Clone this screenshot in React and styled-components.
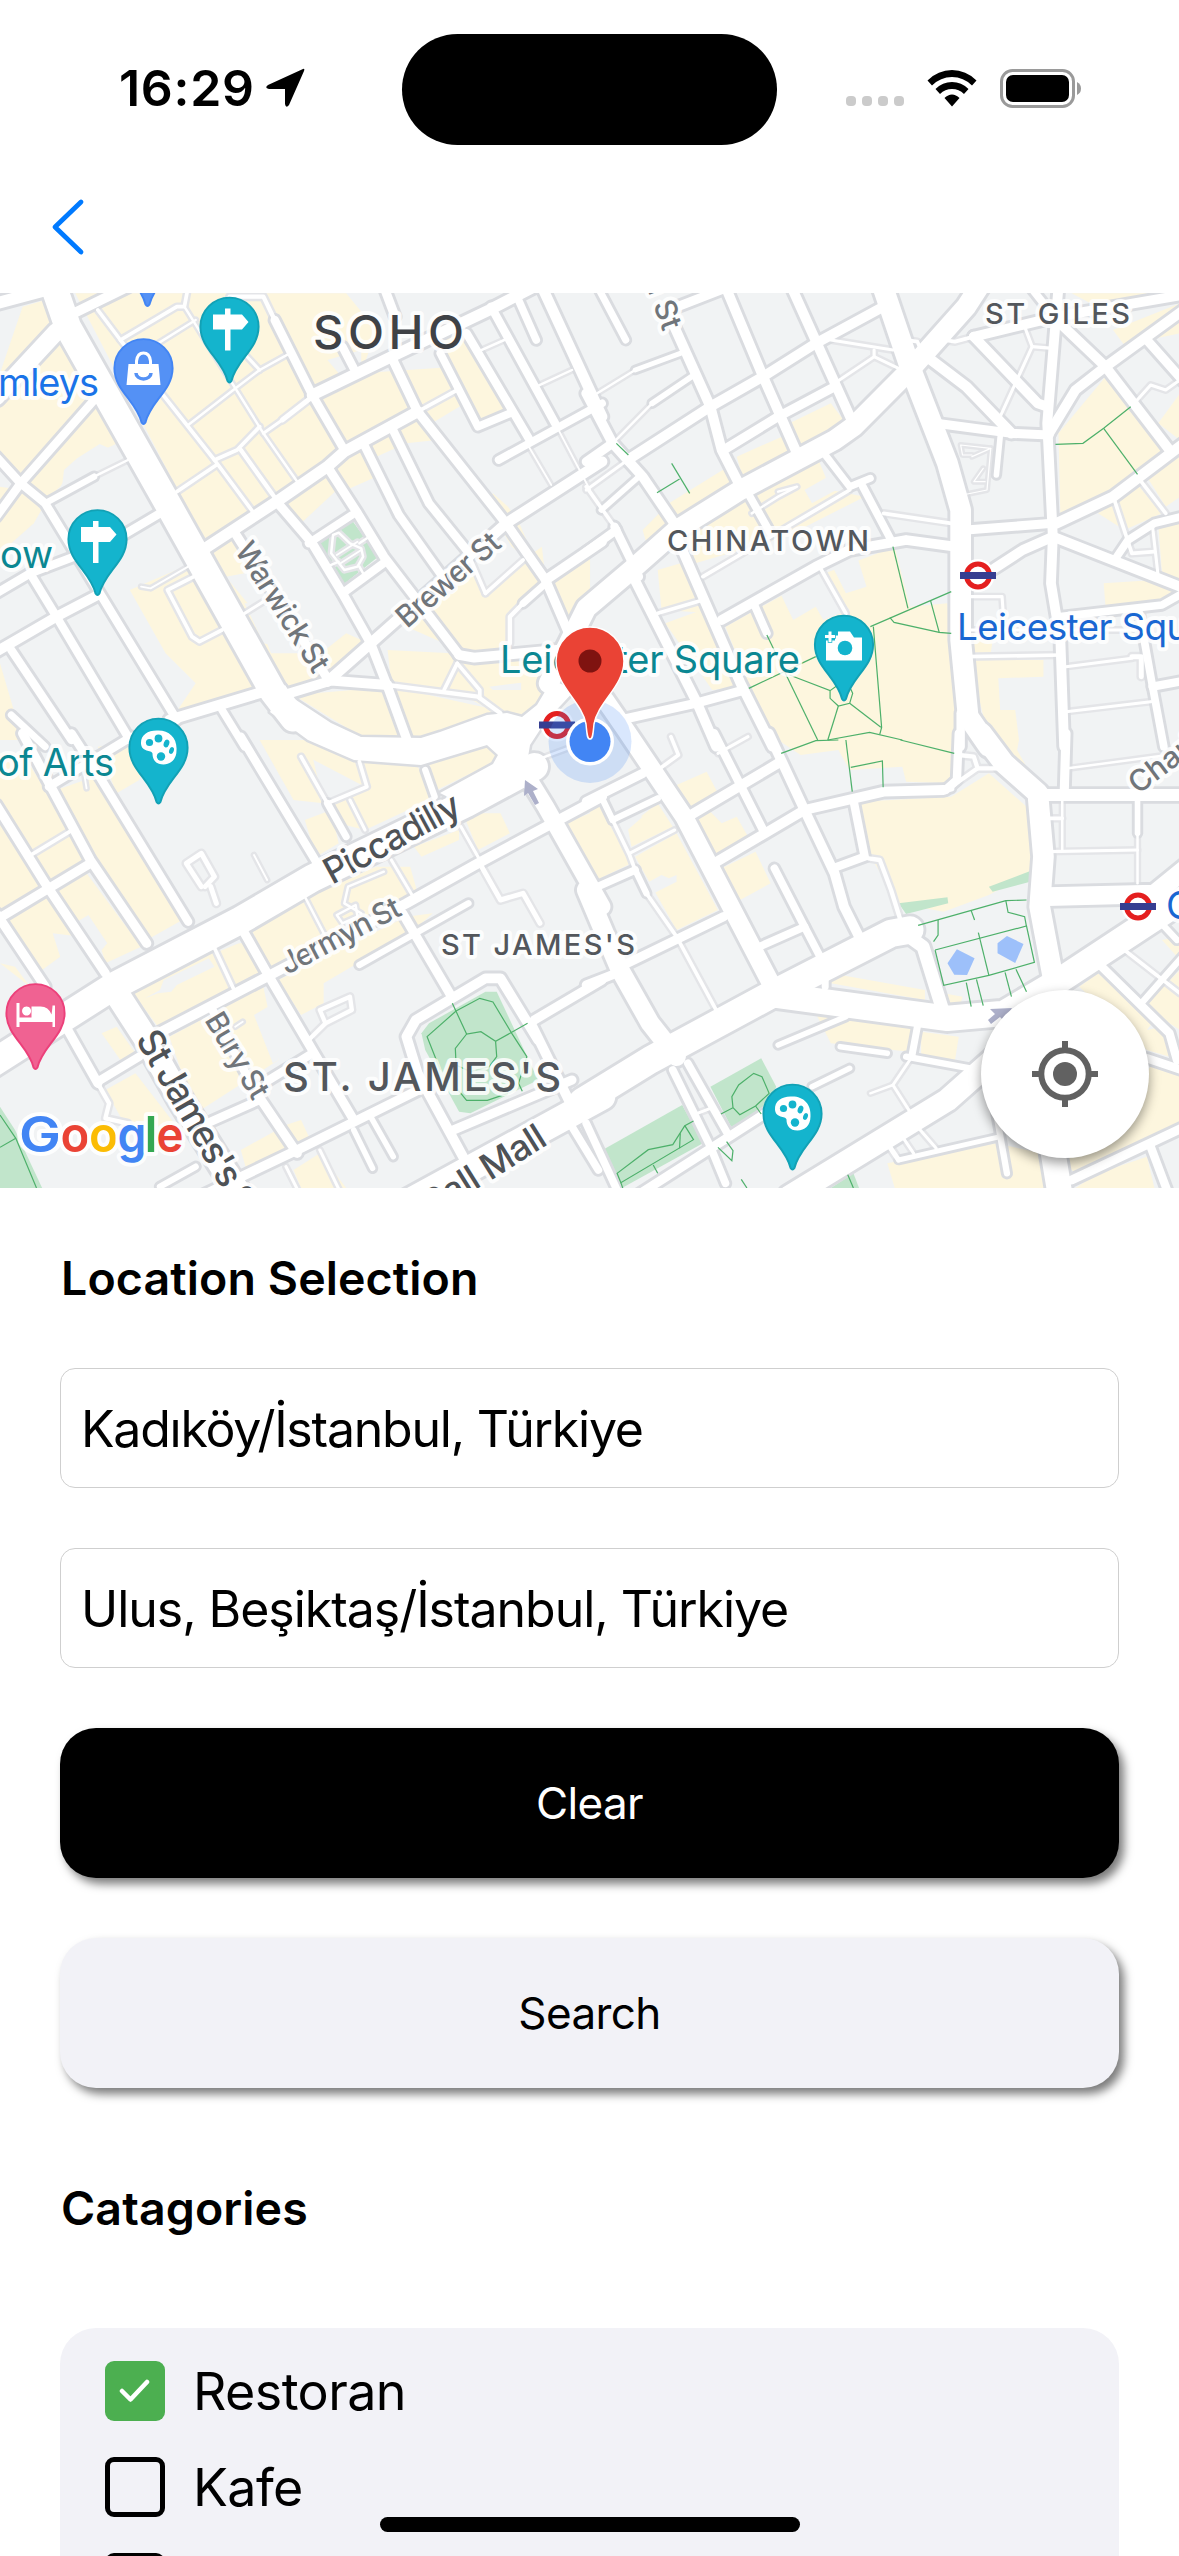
import React from "react";
import styled, { createGlobalStyle, css } from "styled-components";

const GlobalStyle = createGlobalStyle`
  * { box-sizing: border-box; }
  body { margin: 0; background: #fff; }
`;

const Screen = styled.main`
  position: relative;
  display: flex;
  flex-direction: column;
  width: 1179px;
  height: 2556px;
  overflow: hidden;
  background: #fff;
  color: #000;
  font-family: Inter, "Liberation Sans", sans-serif;
`;

const StatusBar = styled.div`
  display: grid;
  grid-template-columns: 402px 375px 1fr;
  align-items: center;
  height: 177px;
  flex: none;
`;

const Clock = styled.div`
  display: flex;
  align-items: center;
  gap: 10px;
  padding: 0 0 2px 119px;
  font-size: 50px;
  font-weight: 600;
  line-height: 60px;
  letter-spacing: 0.7px;
`;

const Island = styled.div`
  height: 111px;
  margin-top: 1px;
  border-radius: 56px;
  background: #000;
`;

const StatusIcons = styled.div`
  display: flex;
  align-items: center;
  padding-left: 69px;
  gap: 23px;
`;

const SignalDots = styled.div`
  display: flex;
  gap: 6px;
  padding-top: 24px;
`;

const Dot = styled.i`
  width: 10px;
  height: 10px;
  border-radius: 4px;
  background: #cbcbcb;
`;

const NavBar = styled.nav`
  display: flex;
  align-items: center;
  height: 116px;
  padding: 0 0 17px 49px;
  flex: none;
`;

const BackButton = styled.button`
  display: flex;
  padding: 0;
  border: 0;
  background: none;
`;

const MapFrame = styled.section`
  position: relative;
  height: 895px;
  flex: none;
  overflow: hidden;
`;

const MapCanvas = styled.svg`
  display: block;
  width: 1179px;
  height: 895px;
  background: #f1f3f4;
`;

const LocateButton = styled.button`
  position: absolute;
  right: 30px;
  bottom: 30px;
  display: flex;
  align-items: center;
  justify-content: center;
  width: 168px;
  height: 168px;
  padding: 0;
  border: 0;
  border-radius: 50%;
  background: #fff;
  box-shadow: 0 5px 12px rgba(0, 0, 0, 0.4);
`;

const Form = styled.section`
  display: flex;
  flex-direction: column;
  padding: 60px 60px 0;
`;

const Heading = styled.h2`
  margin: 0;
  font-size: 46.5px;
  font-weight: 600;
  line-height: 60px;
  letter-spacing: 0.1px;
  text-indent: 1px;
`;

const Fields = styled.div`
  display: flex;
  flex-direction: column;
  gap: 60px;
  padding: 60px 0 90px;
`;

const Field = styled.div`
  display: flex;
  align-items: center;
  height: 120px;
  padding: 1px 20px 0;
  border: 1px solid #cfcfcf;
  border-radius: 15px;
  font-size: 50px;
  letter-spacing: ${(p) => p.$tracking}px;
  white-space: nowrap;
`;

const Button = styled.button`
  height: 150px;
  padding: 0;
  border: 0;
  border-radius: 36px;
  font-family: inherit;
  font-size: 44px;
  letter-spacing: -0.6px;
  box-shadow: 5px 6px 10px rgba(0, 0, 0, 0.52);
  ${(p) =>
    p.$dark
      ? css`background: #000; color: #fff;`
      : css`background: #f2f2f7; color: #000;`}
`;

const Categories = styled.ul`
  display: flex;
  flex-direction: column;
  gap: 36px;
  height: 400px;
  margin: 90px 0 0;
  padding: 33px 45px;
  border-radius: 36px;
  background: #f2f2f7;
  list-style: none;
`;

const Category = styled.li`
  display: flex;
  align-items: center;
  gap: 28px;
  height: 60px;
  flex: none;
  font-size: 52px;
  letter-spacing: -0.6px;
`;

const CheckBox = styled.span`
  display: flex;
  align-items: center;
  justify-content: center;
  width: 60px;
  height: 60px;
  border-radius: 9px;
  ${(p) => (p.$on ? css`background: #4caf50;` : css`border: 5px solid #000;`)}
`;

const HomeIndicator = styled.div`
  position: absolute;
  left: 380px;
  bottom: 24px;
  width: 420px;
  height: 15px;
  border-radius: 8px;
  background: #000;
`;

/* The map is stored as four tiles, each with its own local coordinates. */
const TILE_X = 0.3763;
const TILE_Y = 1 / 3;

const tiles = [
  {
    x: 0, y: 290,
    built: [
      "200,10 920,10 1000,120 960,250 1210,230 1250,330 1000,500 870,530 750,640 550,770",
      "60,50 120,30 160,150 330,450 200,520 160,590 110,640 0,500 0,250",
      "0,590 60,600 110,660 90,700 0,790",
      "550,770 630,740 650,850 600,860 680,970 720,1090 800,1090 880,1160 760,1210",
      "345,900 510,820 690,1200 460,1280 520,1180 440,1090",
      "750,640 870,550 895,600 800,700", "820,1120 920,1030 980,1060 900,1150",
      "1040,990 1240,800 1280,900 1440,770 1450,870 1350,1000 1360,1080 1240,1090",
      "1310,610 1350,650 1380,700 1430,830 1360,770 1290,640",
      "1030,1080 1200,1090 1350,1100 1480,1090 1430,1240 1380,1285 1320,1270 1220,1210 1040,1180",
      "780,1215 1040,1190 1320,1260 1260,1310 1090,1350 960,1340",
      "1440,870 1568,790 1568,960 1500,1000",
      "1130,120 1240,120 1350,370 1280,400", "0,1120 60,1350 0,1350",
      "880,540 960,480 1000,560 920,600", "1000,500 1110,380 1160,450 1080,460",
    ],
    blocks: ["205,505 265,462 340,500 420,660 300,730 130,650 165,590 170,540", "870,210 960,180 960,240 900,250", "650,940 710,940 780,1080 700,1060", "1300,1190 1385,1178 1385,1200 1310,1200"],
    parks: ["835,760 935,690 1005,800 905,890"],
    roads: {
      main: [[28, "140,-20 180,110 455,660 725,1205 780,1285"]],
      wide: [[28, "150,125 -10,320"], [18, "545,775 735,635 870,530 915,485 1110,365"], [18, "830,315 1040,200 1300,60 1420,-10"], [17, "870,1175 985,1060 1345,700 1600,515"], [17, "1440,-10 1600,380"]],
      street: [[17, "-10,40 140,-5"], [12, "250,330 55,580 -10,680"], [12, "-10,500 55,580 120,640 260,900 470,1290"], [9, "120,640 250,560"], [12, "425,670 290,760 80,850 -10,910"], [14, "-10,1085 150,980 260,915"], [12, "80,850 150,980 345,1350"], [12, "30,1080 190,1350"], [10, "30,1275 120,1370"], [14, "205,65 340,-10"], [12, "730,90 830,315 915,480"], [12, "910,170 940,235"], [13, "1040,200 1110,365 1345,700 1450,870 1515,1040"], [13, "735,635 830,760 910,910 985,1060 1030,1190 1085,1360"], [13, "870,530 950,670 1020,800 1220,1095"], [12, "970,470 1060,675 1195,890"], [12, "1040,410 1140,640 1240,780"], [13, "625,730 870,1165"], [14, "740,1220 880,1172 1030,1185"], [11, "820,760 935,675"], [12, "910,910 1025,815"], [15, "450,1290 700,1205"], [14, "1220,1095 1260,1103 1480,1080"], [14, "1450,870 1600,755"], [10, "1390,940 1450,880"], [11, "1170,190 1270,410 1355,370"], [12, "1240,130 1405,445"], [11, "1325,510 1600,340"], [11, "1370,10 1425,150"], [12, "1305,50 1475,400"], [13, "1020,-10 1050,80"], [11, "590,1260 650,1370"]],
      lane: [[4, "250,560 340,510"], [6, "260,60 320,150 470,50 490,50 500,-10"], [4, "490,50 700,430 790,575"], [6, "320,150 430,310 570,510 675,670"], [4, "420,160 520,90"], [4, "500,405 620,300 690,240 770,190"], [6, "570,510 630,480 690,410"], [5, "700,430 750,390"], [8, "750,390 830,320"], [6, "470,605 575,525"], [7, "640,480 735,630"], [7, "610,20 700,20 730,90"], [5, "640,180 690,240"], [6, "1110,365 1215,300"], [7, "1030,1185 1270,1220 1330,1270"], [5, "650,970 700,935"], [6, "515,860 445,900 510,1040 530,1055 590,1020"], [3, "500,830 400,895 375,890"], [6, "1215,1120 1180,1200"], [6, "1215,1120 1275,1200 1275,1225"], [7, "1390,940 1355,980 1355,1060"], [6, "1290,910 1390,810"], [6, "1240,780 1290,910"], [4, "1270,185 1340,150"], [3, "1400,460 1465,585"], [3, "1475,400 1568,600"], [4, "1425,290 1520,240"], [4, "865,832 900,815"], [4, "885,735 900,728 930,760 960,775 965,800 950,830 915,840 880,790 885,735"], [3, "895,795 950,755"], [3, "905,820 960,780"], [4, "955,830 965,850"], [4, "955,760 975,745"]],
    },
    paths: [],
  },
  {
    x: 590, y: 290,
    built: [
      "140,720 210,640 360,535 390,590 230,690 150,760", "390,500 510,440 530,490 410,580", "530,400 640,340 680,400 550,470",
      "250,700 410,620 600,490 640,600 730,620 520,740 280,820", "180,840 270,810 330,970 190,960", "200,1000 320,950 400,1190 325,1200",
      "360,1010 600,860 810,770 850,950 950,940 960,1100 975,1260 970,1350 480,1350",
      "1010,1110 1205,1110 1205,1160 1085,1165 1090,1260 1130,1260 1140,1350 1060,1350", "1010,1050 1070,1050 1065,1090 1010,1090",
      "1245,430 1370,260 1530,480 1470,550 1250,680", "1390,120 1568,40 1568,130 1420,165", "1280,10 1480,10 1440,40 1330,40",
      "1365,880 1500,870 1568,900 1510,940 1370,950", "1510,700 1568,690 1568,870 1520,850", "1350,670 1460,590 1520,670 1420,720", "1510,400 1568,310 1568,450", "1480,560 1568,480 1568,620 1530,650",
    ],
    blocks: ["480,850 600,840 690,960 620,990 600,950 540,990", "640,820 710,800 735,890 680,910", "570,600 640,555 670,590 590,640", "825,770 960,770 960,910 850,940", "620,690 720,640 790,740 640,760"],
    parks: [],
    roads: {
      main: [[21, "-110,1180 -10,955 110,840 230,720 400,600 650,450 700,410 850,240 1000,50 1040,-20"], [22, "775,-20 850,230 950,520 985,660 985,1050 1005,1280 1060,1370"]],
      wide: [[16, "100,510 320,350 460,260 600,160 780,50"], [16, "360,-10 460,260 550,490"], [16, "535,-10 695,390"], [16, "220,100 320,350 350,480 400,590"], [17, "1240,700 1390,620 1590,450"]],
      street: [[14, "-10,310 60,460 140,560 230,710"], [10, "20,-10 95,150"], [13, "210,60 370,-10"], [13, "-10,515 60,460"], [13, "355,480 500,380 650,290"], [7, "120,240 240,190"], [8, "165,340 270,260"], [8, "30,660 130,560"], [12, "65,710 130,860"], [12, "-10,785 70,720"], [14, "110,850 285,1240 335,1370"], [14, "230,740 400,1180 485,1370"], [11, "420,610 480,730"], [14, "350,990 600,830 690,780 840,750 970,770"], [11, "435,940 470,1030"], [10, "615,480 690,590 745,565"], [11, "725,590 800,750"], [13, "80,1290 280,1240 410,1200"], [13, "1000,720 1230,700"], [14, "1075,835 1150,780 1230,740"], [14, "1245,-10 1215,400 1230,740 1225,880 1250,1050 1260,1370"], [15, "895,200 1000,290 1120,430"], [14, "1020,140 1190,340 1215,350"], [14, "1020,140 1240,80 1600,10"], [13, "920,400 1120,430 1220,435"], [8, "1080,555 1090,440"], [14, "1240,90 1370,230 1540,480"], [14, "1220,430 1290,300 1370,230 1590,50"], [13, "1480,150 1590,290"], [11, "1170,-10 1240,90"], [14, "1230,740 1590,900"], [11, "1400,800 1430,750 1500,700 1590,675"], [11, "1250,980 1520,945 1590,900"], [12, "1495,1190 1590,1170"], [11, "1460,970 1495,1190 1525,1370"], [12, "985,1270 985,1370"]],
      lane: [[4, "-10,330 120,240"], [4, "60,460 165,340"], [5, "640,150 805,180"], [5, "755,180 755,200 650,280"], [5, "755,200 820,235"], [5, "-10,600 100,510"], [6, "-10,590 65,710"], [6, "180,970 300,930"], [6, "300,860 480,740 690,600"], [4, "430,670 500,620 550,590 500,605"], [6, "610,830 680,970"], [6, "780,670 960,700"], [6, "840,150 870,155 880,180"], [6, "940,150 970,155 1020,140"], [5, "1155,110 1175,170 1090,380"], [5, "1175,170 1230,175"], [6, "1395,635 1440,790 1500,785"], [6, "1465,575 1530,670"], [5, "1495,710 1510,860"], [5, "1450,335 1490,285 1530,300 1568,270"], [6, "1000,1100 1250,1095"], [5, "1265,1130 1440,1105"], [8, "1440,1100 1465,1100 1465,1160"], [5, "1265,1265 1490,1235"], [5, "1000,1020 1450,1020"], [5, "1010,920 1095,920 1100,1000"], [2, "1065,475 1055,600 990,615"], [2, "1015,495 990,495 985,465 1065,475 1015,500"], [2, "1045,535 1020,575 1050,575"]],
    },
    paths: ["1237,463 1310,460 1365,415 1437,350", "1365,415 1455,553", "217,520 265,610", "178,608 238,567", "70,460 102,495", "805,770 845,955", "745,1010 960,905", "905,932 928,1027 960,1030", "797,983 808,997 928,1027", "470,1035 605,1350", "422,1195 600,1100", "530,1155 638,1202 655,1188 690,1190 698,1210 690,1240 660,1248 638,1225 638,1202", "660,1248 632,1350", "690,1240 773,1312", "753,1010 775,1312 770,1333", "632,1350 743,1327 830,1350"],
  },
  {
    x: 0, y: 740,
    built: [
      "150,150 250,110 500,530 390,600", "0,40 60,40 240,370 0,520", "20,540 230,400 375,620 280,670 270,630 285,610 235,525 205,545 215,590 140,580 160,650 100,700", "260,20 410,0 370,120 310,160",
      "690,0 820,0 860,190 780,180", "880,200 970,140 800,40 820,0 940,60 1110,80 1160,170 970,270 900,250", "1140,70 1300,20 1325,60 1160,150", "810,240 880,210 900,310 840,350", "1230,220 1330,220 1355,280 1270,330",
      "660,550 800,480 1000,380 1090,380 1110,460 720,690", "740,720 1080,530 1150,520 1100,570 860,730 860,790 800,825", "1100,320 1220,270 1220,300 1120,350",
      "350,750 560,610 660,610 690,700 420,860 380,800", "450,890 700,740 740,960 520,1120", "280,1050 360,1000 470,1160 330,1150", "270,880 310,860 360,940 320,960", "760,1155 800,1140 825,1200 660,1310 640,1230", "1480,260 1568,220 1568,420", "780,1290 850,1240 920,1344 800,1344", "0,670 40,680 80,740",
    ],
    blocks: ["385,775 425,750 435,720 555,655 570,680 470,735 455,755 420,760", "675,825 720,795 740,960 725,970", "560,610 640,570 655,600 580,635"],
    parks: ["1120,880 1140,850 1290,755 1320,755 1430,1020 1250,1120 1220,1115 1130,930", "0,1100 40,1170 112,1344 0,1344"],
    roads: {
      main: [[29, "-20,970 300,740 640,540 830,415 1240,190 1420,80"], [26, "310,760 390,900 480,1080 640,1370"], [28, "1080,1390 1600,1070"]],
      wide: [[27, "1390,90 1450,200 1600,500"], [16, "395,895 710,710 1080,490 1270,370 1600,170"], [15, "540,1365 790,1230 1130,1040"]],
      street: [[13, "-10,540 240,370"], [12, "130,140 350,-10"], [13, "60,-20 140,150 240,360 390,610"], [12, "190,-20 270,120 500,545"], [13, "-10,195 120,430 280,700"], [13, "-10,520 120,740"], [12, "640,-10 840,365"], [13, "170,850 260,1030"], [12, "260,1025 370,950"], [13, "640,560 710,700 830,930 940,1140"], [12, "700,1030 830,940"], [13, "670,1040 790,1240"], [12, "550,1150 690,1080"], [12, "560,800 690,1080"], [10, "870,190 920,290"], [9, "1130,90 1155,170"], [9, "955,675 1245,490"], [13, "1070,520 1200,770"], [14, "1430,900 1330,715 1290,715 1105,840 1080,890 1110,1000 1240,1270"], [14, "1415,860 1520,1100"], [13, "1420,840 1600,720"], [13, "1205,1170 1520,1020"], [9, "425,1340 520,1280"], [8, "940,1170 990,1285"], [8, "985,1130 1045,1250"], [11, "1520,1160 1590,1290"]],
      lane: [[6, "75,350 185,275"], [7, "260,1030 290,1090 280,1135 340,1150"], [6, "560,600 620,745"], [7, "820,900 865,850 935,810 930,770 850,810 865,850"], [4, "810,470 865,590"], [5, "930,180 970,270"], [6, "800,50 870,190 975,140 955,65"], [5, "1040,360 1095,465"], [5, "1225,260 1275,360"], [8, "1280,380 1330,480 1390,460 1435,550"], [8, "535,440 495,370 535,340 570,410 545,440"], [8, "560,440 575,490"], [3, "675,345 710,420"], [5, "760,1280 800,1370"], [5, "850,1230 910,1370"], [4, "1390,75 1568,0"], [3, "225,110 230,145"], [4, "1020,395 925,440 915,490 960,520"], [4, "895,525 945,495 950,530 910,550 895,525"], [3, "625,860 645,845"]],
    },
    paths: ["1170,990 1135,890 1212,813 1275,775 1310,786 1360,880 1400,950 1378,1030 1388,1054", "1202,790 1240,882 1278,875 1317,904 1402,850", "1240,882 1210,925 1212,975 1250,995 1300,980 1320,950 1317,904", "1210,1040 1240,1081 1295,1081 1350,1060", "0,1125 42,1195 97,1344", "42,1195 0,1222"],
  },
  {
    x: 590, y: 740,
    built: [
      "715,185 960,170 1060,100 1160,200 1180,290 1170,400 1060,465 940,515 820,490 740,340", "0,200 20,190 110,370 0,430", "100,260 180,190 220,260 110,320", "120,350 230,280 340,510 230,570 180,470",
      "220,140 310,95 340,160 260,205", "270,240 320,215 350,250 390,230 420,290 320,350", "340,390 440,335 480,430 390,485",
      "500,0 970,0 960,130 840,125 830,80 690,90 660,30 560,45", "1070,0 1140,0 1135,30 1160,80 1120,90", "640,700 890,750 890,780 640,730", "600,820 860,860 850,935 640,910", "880,875 980,890 970,960 880,945",
      "1300,740 1350,700 1550,900 1540,950 1480,930", "1490,980 1568,1010 1568,1160 1290,1300 1250,1260", "790,1270 1080,1210 1200,1240 1220,1344 810,1344", "1470,800 1568,690 1568,870", "1350,1300 1480,1250 1500,1344 1290,1344", "1520,600 1568,590 1568,660", "940,760 990,770 985,790 950,790",
    ],
    blocks: ["150,430 190,405 210,415 230,405 230,425 170,460", "1480,870 1500,840 1520,860", "80,260 120,225 140,230 100,270"],
    parks: ["320,1040 455,955 495,1040 460,1120 375,1160", "25,1235 245,1095 300,1210 85,1344 70,1344", "820,490 950,472 952,490 840,522", "1060,440 1170,393 1170,425 1070,455", "640,1344 700,1300 715,1344"],
    roads: {
      main: [[19, "40,-120 95,-30 250,230 490,750"], [29, "-20,1085 160,960 480,765 800,580 850,570"], [27, "490,765 950,835 1100,820 1250,720 1600,460"], [22, "1040,-20 1100,70 1190,160 1205,350 1195,500 1235,740"], [24, "530,1370 950,1080 1080,950 1200,860"]],
      wide: [[21, "830,575 885,620 940,820"], [30, "-10,450 80,690 160,850 230,950"], [30, "1215,470 1500,462 1600,370"], [40, "1225,1200 1250,1370"]],
      street: [[13, "-10,185 140,100"], [11, "-10,455 120,390"], [9, "60,240 180,175"], [9, "30,170 60,240"], [9, "120,390 150,460"], [13, "90,675 355,530"], [13, "-10,735 70,700"], [14, "260,230 500,70"], [12, "330,-20 460,270"], [14, "330,370 570,210 780,155 940,150"], [9, "940,150 960,145"], [12, "700,180 730,350 645,385"], [14, "475,-20 570,210 650,400 675,500 715,590"], [11, "490,385 570,560 630,690"], [11, "450,620 570,560"], [12, "980,-20 975,120 945,150"], [13, "1265,-20 1260,165"], [17, "1190,165 1600,165"], [8, "1455,180 1455,280"], [10, "625,690 625,740"], [8, "500,915 680,830"], [8, "665,920 790,940"], [9, "840,950 1010,985"], [10, "870,860 855,950"], [8, "590,1040 690,985"], [7, "820,1260 1090,1190"], [9, "1070,1060 1108,1300"], [11, "220,990 320,1220 360,1330"], [11, "260,970 370,1190"], [13, "120,1370 370,1190 480,1110"], [11, "-10,1150 80,1370"], [12, "1360,680 1540,880 1560,960"], [13, "1280,1320 1600,1150"], [12, "1490,1220 1540,1370"], [12, "1480,955 1600,1000"], [9, "1465,790 1590,630"], [9, "1510,540 1560,600"]],
      lane: [[6, "60,240 105,345 120,390"], [5, "105,340 225,270"], [6, "150,460 230,590 340,820"], [6, "180,90 235,45 215,-10"], [5, "340,40 420,-10"], [7, "740,355 770,360 800,450 825,540"], [6, "1210,190 1215,235 1255,235"], [4, "1255,180 1255,330"], [5, "1215,335 1455,330"], [4, "1455,280 1455,430"], [4, "1270,85 1568,40"], [6, "1420,630 1568,760"], [5, "850,960 805,1035 850,1115"], [4, "745,1060 805,1035"], [8, "790,1210 820,1260"], [5, "870,1160 920,1225"], [5, "830,1190 860,1240"], [5, "285,1120 320,1105"], [7, "980,45 1020,50 1030,85"], [7, "960,140 1030,85 1080,85"]],
    },
    paths: ["508,40 600,2 660,0", "680,0 697,155", "693,82 777,63 779,142", "825,0 968,40", "872,556 1105,482 1160,480", "917,630 1160,558 1181,667 1060,706 940,736 917,630", "1032,578 1060,706", "1013,512 1022,540", "925,540 925,585 913,605", "1105,482 1111,517 1155,530 1160,560", "1000,728 1013,800", "1027,718 1045,797", "1103,697 1120,770", "1132,688 1160,755", "348,1122 380,1103 377,1070 395,1035 435,1000 457,1010 476,1060 440,1098 398,1124 380,1103", "440,1098 455,1122", "275,1143 252,1157 275,1199 82,1328 72,1300 155,1229 220,1214 252,1157", "240,1180 238,1225", "168,1275 180,1300", "82,1328 87,1344", "340,1222 377,1262 380,1232 363,1205", "402,1318 417,1344", "685,1304 700,1344"],
    water: ["975,628 1022,655 1002,705 968,704 950,670", "1108,588 1152,612 1130,669 1083,640 1083,610"],
  },
];

/* Map width factor for each class of road. */
const ROAD_SCALE = { lane: 0.62, street: 0.7, wide: 0.62, main: 0.94 };
const ROAD_KINDS = ["lane", "street", "wide", "main"];

function TileLayer({ children }) {
  return tiles.map((t) => (
    <g key={`${t.x}-${t.y}`} transform={`translate(${t.x} ${t.y}) scale(${TILE_X} ${TILE_Y})`}>
      {children(t)}
    </g>
  ));
}

function Roads({ tile, kind, color, extra }) {
  return tile.roads[kind].map(([width, points]) => (
    <polyline
      key={points}
      points={points}
      fill="none"
      stroke={color}
      strokeWidth={width * ROAD_SCALE[kind] + extra}
      strokeLinejoin="round"
      strokeLinecap="round"
      vectorEffect="non-scaling-stroke"
    />
  ));
}

const JUNCTION = "285,685 293,698 331,723 361,737 421,738 440,732 487,715 507,713 522,717 537,705 552,680 575,690 563,703 545,722 530,745 527,763 516,785 470,808 440,793 493,764 498,755 487,745 421,765 354,760 308,740 270,712";

const MapLabel = styled.text`
  font-family: Inter, "Liberation Sans", sans-serif;
  font-weight: ${(p) => p.$weight || 400};
  stroke: #fff;
  stroke-opacity: 0.85;
  stroke-width: 8px;
  stroke-linejoin: round;
  paint-order: stroke;
`;

const labels = [
  { t: "SOHO", x: 313, y: 349, s: 47, w: 500, c: "#3f4246", l: 151 },
  { t: "ST GILES", x: 985, y: 324, s: 29, w: 500, c: "#53575c", l: 145 },
  { t: "CHINATOWN", x: 667, y: 551, s: 29, w: 500, c: "#53575c", l: 202 },
  { t: "ST JAMES'S", x: 441, y: 955, s: 29, w: 500, c: "#53575c", l: 194 },
  { t: "ST. JAMES'S", x: 283, y: 1091, s: 40, w: 500, c: "#53575c", l: 278 },
  { t: "Leicester Square", x: 500, y: 673, s: 38, c: "#0b8792", l: 300 },
  { t: "Leicester Square", x: 957, y: 640, s: 37, c: "#1967d2", l: 285 },
  { t: "mleys", x: 99, y: 396, s: 38, c: "#1a73e8", a: "end", l: 101 },
  { t: "ow", x: 53, y: 568, s: 38, c: "#0b8792", a: "end", l: 53 },
  { t: "of Arts", x: 114, y: 776, s: 38, c: "#0b8792", a: "end", l: 117 },
  { t: "Charing Cross", x: 1166, y: 919, s: 38, c: "#1967d2" },
  { t: "Warwick St", x: 234, y: 550, s: 30, w: 500, c: "#70757a", r: 57.5, l: 148 },
  { t: "Brewer St", x: 407, y: 629, s: 30, w: 500, c: "#70757a", r: -41, l: 127 },
  { t: "Piccadilly", x: 332, y: 885, s: 36, w: 500, c: "#4e5256", r: -28.500, l: 150 },
  { t: "Jermyn St", x: 287, y: 975, s: 30, w: 500, c: "#70757a", r: -27.500, l: 131 },
  { t: "Bury St", x: 204, y: 1020, s: 30, w: 500, c: "#70757a", r: 59, l: 95 },
  { t: "St James's St", x: 135, y: 1039, s: 37, w: 500, c: "#4e5256", r: 60, l: 214 },
  { t: "Pall Mall", x: 549, y: 1144, s: 36, w: 500, c: "#4e5256", r: -32, a: "end", l: 138 },
  { t: "Charing Cross Rd", x: 1138, y: 795, s: 30, w: 500, c: "#70757a", r: -37 },
  { t: "Dean St", x: 663, y: 332, s: 30, w: 500, c: "#70757a", r: 70, a: "end" },
];

const PIN = "M-2 -2C-7 -24 -30 -35 -30 -58A30 30 0 0 1 30 -58C30 -35 7 -24 2 -2Q0 1 -2 -2Z";

const glyphs = {
  sign: <path d="M-4.500 -74v6h-12v15h12v21h5.500v-21h11.500l6.500 -7.500l-6.500 -7.500h-11.500v-6z" fill="#fff" />,
  bag: (
    <g fill="none">
      <path d="M-15 -60h30l2 21h-34z" fill="#fff" />
      <path d="M-7 -59v-4q1 -8 7 -8t7 8v4" stroke="#fff" strokeWidth="3" />
      <path d="M-7.500 -51a7.500 6 0 0 0 15 0" stroke="#5491f5" strokeWidth="3.500" />
    </g>
  ),
  palette: (
    <g>
      <path d="M-2 -73C10 -74 19 -66 18 -53C18 -44 12 -39 5 -39C-3 -39 -6 -44 -6 -50C-7 -54 -17 -51 -17.500 -60C-18 -68 -11 -73 -2 -73Z" fill="#fff" />
      <g fill="#14b4cd">
        <circle cx="-9" cy="-61" r="3.600" />
        <circle cx="0" cy="-65" r="3.900" />
        <ellipse cx="8" cy="-60" rx="2.700" ry="4" transform="rotate(20 8 -60)" />
        <ellipse cx="13" cy="-53" rx="2.300" ry="3.500" transform="rotate(20 13 -53)" />
        <circle cx="2.500" cy="-47" r="4.200" />
      </g>
    </g>
  ),
  bed: (
    <path d="M-19 -66v24h3v-5h33v5h2.500v-21.500h-2.500q0 2 -1 9q-3 -8 -11 -8h-9v11h-12v-14.500zM-9 -62.500a4.500 4.500 0 1 0 .1 0z" fill="#fff" />
  ),
  camera: (
    <g>
      <path d="M-18 -60h9v-5h3v-4h12l4 6h8v23h-36z" fill="#fff" />
      <path d="M-15.500 -69h3v3.500h3.500v3h-3.500v4h-3v-4h-3.500v-3h3.500z" fill="#fff" stroke="#14b4cd" strokeWidth="1.500" paintOrder="stroke" />
      <circle cx="1" cy="-52.500" r="7.300" fill="#14b4cd" />
    </g>
  ),
};

const teal = { fill: "#14b4cd", edge: "#12a1b5" };
const blue = { fill: "#5491f5", edge: "#4285f4" };
const pins = [
  { x: 147.5, y: 306, k: "bag", ...blue },
  { x: 229.5, y: 382.5, k: "sign", ...teal },
  { x: 143.5, y: 424, k: "bag", ...blue },
  { x: 97.5, y: 595, k: "sign", ...teal },
  { x: 158.5, y: 803.5, k: "palette", ...teal },
  { x: 792.5, y: 1169.5, k: "palette", ...teal },
  { x: 844, y: 700.5, k: "camera", ...teal },
  { x: 35.5, y: 1069, k: "bed", fill: "#f06292", edge: "#ec407a" },
];

const stations = [[557, 725], [978, 575.5], [1138, 906.5]];

const wordmark = [
  { ch: "G", color: "#4285f4", x: 19, w: 42 },
  { ch: "o", color: "#ea4335", x: 60.5, w: 29 },
  { ch: "o", color: "#fbbc04", x: 89, w: 29 },
  { ch: "g", color: "#4285f4", x: 117.5, w: 29 },
  { ch: "l", color: "#34a853", x: 144.5, w: 13 },
  { ch: "e", color: "#ea4335", x: 156.5, w: 27 },
];

function CityMap() {
  return (
    <MapCanvas viewBox="0 293 1179 895">
      <TileLayer>
        {(t) => (
          <>
            {t.built.map((p) => <polygon key={p} points={p} fill="#fdf6de" />)}
            {t.blocks.map((p) => <polygon key={p} points={p} fill="#f1f3f4" />)}
            {t.parks.map((p) => <polygon key={p} points={p} fill="#c1e5cb" />)}
            {(t.water || []).map((p) => <polygon key={p} points={p} fill="#9dc0fa" />)}
          </>
        )}
      </TileLayer>
      <TileLayer>{(t) => <Roads tile={t} kind="lane" color="#e4e5e8" extra={4.8} />}</TileLayer>
      <TileLayer>
        {(t) => ["street", "wide", "main"].map((k) => <Roads key={k} tile={t} kind={k} color="#dadce0" extra={5.8} />)}
      </TileLayer>
      <polygon points={JUNCTION} fill="#fff" stroke="#dadce0" strokeWidth="5" strokeLinejoin="round" />
      <TileLayer>
        {(t) => ROAD_KINDS.map((k) => <Roads key={k} tile={t} kind={k} color="#fff" extra={0} />)}
      </TileLayer>
      <polygon points={JUNCTION} fill="#fff" />
      <TileLayer>
        {(t) => t.paths.map((p) => (
          <polyline key={p} points={p} fill="none" stroke="#4db06a" strokeWidth="1.2" vectorEffect="non-scaling-stroke" />
        ))}
      </TileLayer>
      <path d="M525 780l-1 16 4 -3 7 12 4 -2 -6 -12 5 -2z" fill="#adb0ca" />
      <path d="M1012 1008l-22 1 5 5 -7 6 3 4 9 -7 4 4z" fill="#adb0ca" />

      {labels.map((l) => (
        <MapLabel
          key={`${l.t}-${l.x}`}
          transform={`translate(${l.x} ${l.y}) rotate(${l.r || 0})`}
          fontSize={l.s}
          $weight={l.w}
          fill={l.c}
          textAnchor={l.a || "start"}
          textLength={l.l}
        >
          {l.t}
        </MapLabel>
      ))}
      {stations.map(([x, y]) => (
        <g key={x} transform={`translate(${x} ${y})`}>
          <circle r="16.500" fill="#fff" />
          <circle r="11.500" fill="#fff" stroke="#e41f1f" strokeWidth="5" />
          <rect x="-18" y="-3.500" width="36" height="7" fill="#363e91" />
        </g>
      ))}
      {pins.map((p) => (
        <g key={`${p.x}-${p.y}`} transform={`translate(${p.x} ${p.y})`}>
          <path d={PIN} fill={p.fill} stroke={p.edge} strokeWidth="2" transform="translate(0 .5) scale(.97)" />
          {glyphs[p.k]}
        </g>
      ))}
      <circle cx="590" cy="741.500" r="41.500" fill="#4285f4" fillOpacity="0.2" />
      <circle cx="590" cy="741.500" r="24" fill="#fff" />
      <circle cx="590" cy="741.500" r="20.500" fill="#4285f4" />
      <path
        d="M590 739C587 739 587 734 586 724C582 702 556 686 556 661A34 34 0 0 1 624 661C624 686 598 702 594 724C593 734 593 739 590 739Z"
        fill="#ea4335" stroke="#fff" strokeWidth="1.500"
      />
      <circle cx="590" cy="661" r="11.500" fill="#7f1310" />
      <MapLabel y="1152" fontSize="49" $weight={600}>
        {wordmark.map(({ ch, color, x, w }) => (
          <tspan key={x} x={x} textLength={w} lengthAdjust="spacingAndGlyphs" fill={color}>{ch}</tspan>
        ))}
      </MapLabel>
    </MapCanvas>
  );
}

const ArrowIcon = () => (
  <svg width="40" height="40" viewBox="0 0 40 40">
    <path d="M38 1Q40 0 39 3L24 37Q21 41 20 36V21H4Q-1 20 3 17Z" fill="#000" />
  </svg>
);

const WifiIcon = () => (
  <svg width="50" height="37" viewBox="0 0 50 37">
    <path d="M0.500 10.500Q11 0 25 0T49.500 10.500L45 15.500Q36.500 7 25 7T5 15.500ZM8.500 19Q15.500 12 25 12T41.500 19L37 24Q32 19 25 19T13 24ZM17.500 28Q21 24.500 25 24.500T32.500 28L25 36.500Z" fill="#000" />
  </svg>
);

const BatteryIcon = () => (
  <svg width="82" height="39" viewBox="0 0 82 39">
    <rect x="1.500" y="1.500" width="72" height="36" rx="11" fill="none" stroke="#9a9a9a" strokeWidth="3" />
    <rect x="6" y="6" width="63" height="27" rx="7" fill="#000" />
    <path d="M77 13Q81 15 81 19.500T77 26Z" fill="#9a9a9a" />
  </svg>
);

const ChevronIcon = () => (
  <svg width="36" height="60" viewBox="0 0 36 60">
    <path d="M32 5L6 30L32 55" fill="none" stroke="#007aff" strokeWidth="4.800" strokeLinecap="round" strokeLinejoin="round" />
  </svg>
);

const LocateIcon = () => (
  <svg width="66" height="66" viewBox="0 0 66 66">
    <circle cx="33" cy="33" r="23.700" fill="none" stroke="#616161" strokeWidth="6" />
    <circle cx="33" cy="33" r="12" fill="#616161" />
    <path d="M33 0V9M33 57V66M0 33H9M57 33H66" stroke="#616161" strokeWidth="6" />
  </svg>
);

const CheckIcon = () => (
  <svg width="32" height="24" viewBox="0 0 32 24">
    <path d="M3 12L11.500 20.500L28 3" fill="none" stroke="#fff" strokeWidth="4.500" strokeLinecap="round" strokeLinejoin="round" />
  </svg>
);

const categories = [
  { name: "Restoran", on: true },
  { name: "Kafe", on: false },
  { name: "", on: false },
];

export default function App() {
  return (
    <Screen>
      <GlobalStyle />
      <StatusBar>
        <Clock>
          16:29
          <ArrowIcon />
        </Clock>
        <Island />
        <StatusIcons>
          <SignalDots><Dot /><Dot /><Dot /><Dot /></SignalDots>
          <WifiIcon />
          <BatteryIcon />
        </StatusIcons>
      </StatusBar>
      <NavBar>
        <BackButton aria-label="Back"><ChevronIcon /></BackButton>
      </NavBar>
      <MapFrame>
        <CityMap />
        <LocateButton aria-label="My location"><LocateIcon /></LocateButton>
      </MapFrame>
      <Form>
        <Heading>Location Selection</Heading>
        <Fields>
          <Field $tracking={-1.23}>Kadıköy/İstanbul, Türkiye</Field>
          <Field $tracking={-1.03}>Ulus, Beşiktaş/İstanbul, Türkiye</Field>
          <Button $dark>Clear</Button>
          <Button>Search</Button>
        </Fields>
        <Heading>Catagories</Heading>
        <Categories>
          {categories.map((c, i) => (
            <Category key={i}>
              <CheckBox $on={c.on}>{c.on && <CheckIcon />}</CheckBox>
              {c.name}
            </Category>
          ))}
        </Categories>
      </Form>
      <HomeIndicator />
    </Screen>
  );
}
